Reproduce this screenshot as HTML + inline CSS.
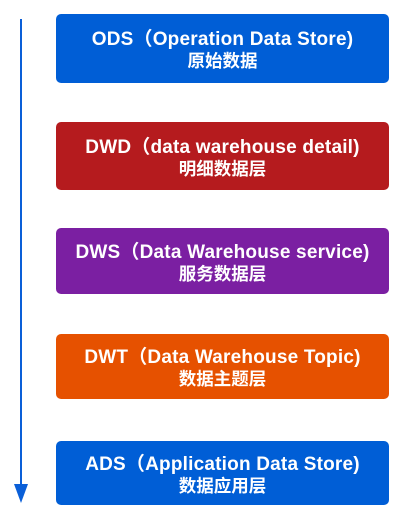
<!DOCTYPE html>
<html><head><meta charset="utf-8"><style>
body{margin:0;width:409px;height:526px;background:#fff;position:relative;overflow:hidden;font-family:"Liberation Sans","Noto Sans CJK SC",sans-serif;}
.b{position:absolute;left:56px;width:333px;border-radius:5px;color:#fff;font-weight:bold;text-align:center;display:flex;flex-direction:column;justify-content:center;box-sizing:border-box;padding-top:4px;}
.b .t{font-size:19px;line-height:22px;letter-spacing:0.2px;}
.b .c{font-size:17.5px;line-height:21px;}
</style></head><body>
<div style="position:absolute;left:20px;top:19px;width:2px;height:468px;background:#0a5fd8"></div>
<svg style="position:absolute;left:14px;top:484px" width="14" height="19"><polygon points="0,0 14,0 7,19" fill="#0a5fd8"/></svg>
<div class="b" style="top:14px;height:69px;background:#005ed6"><div class="t">ODS（Operation Data Store)</div><div class="c">原始数据</div></div>
<div class="b" style="top:122px;height:68px;background:#b51b1e"><div class="t">DWD（data warehouse detail)</div><div class="c">明细数据层</div></div>
<div class="b" style="top:228px;height:66px;background:#7b1fa2"><div class="t">DWS（Data Warehouse service)</div><div class="c">服务数据层</div></div>
<div class="b" style="top:334px;height:65px;background:#e65100"><div class="t">DWT（Data Warehouse Topic)</div><div class="c">数据主题层</div></div>
<div class="b" style="top:441px;height:64px;background:#005ed6"><div class="t">ADS（Application Data Store)</div><div class="c">数据应用层</div></div>
</body></html>
